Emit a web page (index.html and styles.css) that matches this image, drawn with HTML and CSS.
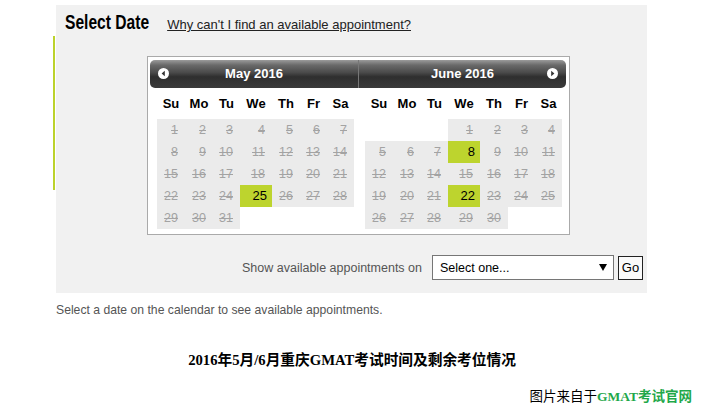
FILE: index.html
```html
<!DOCTYPE html>
<html>
<head>
<meta charset="utf-8">
<link rel="stylesheet" href="styles.css">
</head>
<body>
<div class="page">
  <div class="row">
    <div class="accent"></div>
    <div class="panel">
      <div class="heading">
        <h2 class="title">Select Date</h2>
        <a class="why" href="#">Why can't I find an available appointment?</a>
      </div>
      <div class="calendar">
        <div class="months">
          <div class="month">
            <div class="mhead mhead-first">
              <svg class="nav nav-prev" width="11" height="11" viewBox="0 0 11 11"><circle cx="5.5" cy="5.5" r="5.5" fill="#fff"/><path d="M6.8 2.8 L3.6 5.5 L6.8 8.2 Z" fill="#333"/></svg>
              <span>May 2016</span>
            </div>
            <div class="dnames"><span>Su</span><span>Mo</span><span>Tu</span><span>We</span><span>Th</span><span>Fr</span><span>Sa</span></div>
            <div class="days">
              <span class="d">1</span><span class="d">2</span><span class="d">3</span><span class="d">4</span><span class="d">5</span><span class="d">6</span><span class="d">7</span>
              <span class="d">8</span><span class="d">9</span><span class="d">10</span><span class="d">11</span><span class="d">12</span><span class="d">13</span><span class="d">14</span>
              <span class="d">15</span><span class="d">16</span><span class="d">17</span><span class="d">18</span><span class="d">19</span><span class="d">20</span><span class="d">21</span>
              <span class="d">22</span><span class="d">23</span><span class="d">24</span><span class="d on">25</span><span class="d">26</span><span class="d">27</span><span class="d">28</span>
              <span class="d">29</span><span class="d">30</span><span class="d">31</span><span class="e"></span><span class="e"></span><span class="e"></span><span class="e"></span>
            </div>
          </div>
          <div class="month">
            <div class="mhead mhead-last">
              <span>June 2016</span>
              <svg class="nav nav-next" width="11" height="11" viewBox="0 0 11 11"><circle cx="5.5" cy="5.5" r="5.5" fill="#fff"/><path d="M4.2 2.8 L7.4 5.5 L4.2 8.2 Z" fill="#333"/></svg>
            </div>
            <div class="dnames"><span>Su</span><span>Mo</span><span>Tu</span><span>We</span><span>Th</span><span>Fr</span><span>Sa</span></div>
            <div class="days">
              <span class="e"></span><span class="e"></span><span class="e"></span><span class="d">1</span><span class="d">2</span><span class="d">3</span><span class="d">4</span>
              <span class="d">5</span><span class="d">6</span><span class="d">7</span><span class="d on">8</span><span class="d">9</span><span class="d">10</span><span class="d">11</span>
              <span class="d">12</span><span class="d">13</span><span class="d">14</span><span class="d">15</span><span class="d">16</span><span class="d">17</span><span class="d">18</span>
              <span class="d">19</span><span class="d">20</span><span class="d">21</span><span class="d on">22</span><span class="d">23</span><span class="d">24</span><span class="d">25</span>
              <span class="d">26</span><span class="d">27</span><span class="d">28</span><span class="d">29</span><span class="d">30</span><span class="e"></span><span class="e"></span>
            </div>
          </div>
        </div>
      </div>
      <div class="controls">
        <span class="label">Show available appointments on</span>
        <div class="select">
          <span>Select one...</span>
          <svg width="8" height="7" viewBox="0 0 8 7"><path d="M0 0 L8 0 L4 7 Z" fill="#000"/></svg>
        </div>
        <button class="go" type="button">Go</button>
      </div>
    </div>
  </div>
  <p class="hint">Select a date on the calendar to see available appointments.</p>
  <h3 class="cn-title">2016年5月/6月重庆GMAT考试时间及剩余考位情况</h3>
  <p class="source">图片来自于<b>GMAT考试官网</b></p>
</div>
</body>
</html>
```

FILE: styles.css
```css
html, body {
  margin: 0;
  padding: 0;
  background: #fff;
}
body {
  font-family: "Liberation Sans", Arial, sans-serif;
  font-size: 13px;
  color: #000;
}
.page {
  padding-top: 5px;
}
.row {
  display: flex;
  margin-left: 53px;
}
.accent {
  width: 2px;
  height: 154px;
  margin-top: 31px;
  margin-right: 1px;
  background: #bcd22c;
}
.panel {
  width: 591px;
  height: 288px;
  box-sizing: border-box;
  background: #f1f1f1;
  padding: 5px 0 0 9px;
}
.heading {
  display: flex;
  align-items: baseline;
  height: 24px;
}
.title {
  margin: 0 -21px 0 0;
  font-family: "Liberation Sans", Arial, sans-serif;
  font-weight: bold;
  font-size: 19.5px;
  line-height: 25px;
  color: #000;
  transform: scaleX(0.8);
  transform-origin: left center;
}
.why {
  margin-left: 18px;
  font-size: 13px;
  color: #222;
  text-decoration: underline;
}
.calendar {
  margin: 22px 0 0 82px;
  width: 423px;
  height: 179px;
  box-sizing: border-box;
  border: 1px solid #aaa;
  background: #fff;
  padding: 3px 3px 5px 2px;
}
.months {
  display: flex;
}
.month {
  width: 208px;
}
.mhead {
  height: 28px;
  display: flex;
  align-items: center;
  justify-content: center;
  position: relative;
  background: linear-gradient(to bottom, #9b9b9b 0%, #6a6a6a 18%, #4a4a4a 45%, #2f2f2f 60%, #3a3a3a 100%);
  color: #fff;
  font-weight: bold;
  font-size: 13px;
  line-height: 26px;
}
.mhead-first {
  border-radius: 5px 0 0 5px;
}
.mhead-last {
  border-radius: 0 5px 5px 0;
  border-left: 1px solid #777;
  box-sizing: border-box;
}
.nav {
  position: absolute;
  top: 8px;
}
.nav-prev {
  left: 8px;
}
.nav-next {
  right: 8px;
}
.dnames,
.days {
  display: grid;
  grid-template-columns: 28px 28px 27px 32px 28px 27px 27px;
  padding-left: 7px;
}
.dnames {
  height: 31px;
  align-items: center;
  font-weight: bold;
  font-size: 13px;
  text-align: center;
}
.days {
  grid-auto-rows: 22px;
}
.d {
  background: #ebebeb;
  color: #a3a3a3;
  text-decoration: line-through;
  text-align: right;
  padding-right: 7px;
  line-height: 22px;
  font-size: 12.5px;
}
.d.on {
  background: #bdd42e;
  color: #000;
  text-decoration: none;
  padding-right: 5px;
  font-size: 13px;
}
.controls {
  display: flex;
  justify-content: flex-end;
  align-items: center;
  margin-top: 20px;
  padding-right: 4px;
}
.label {
  color: #555;
  font-size: 12.5px;
  margin-right: 10px;
}
.select {
  width: 182px;
  height: 25px;
  box-sizing: border-box;
  border: 1px solid #767676;
  background: #fff;
  display: flex;
  align-items: center;
  justify-content: space-between;
  padding: 0 6px 0 7px;
  font-size: 12.5px;
  color: #000;
  margin-right: 4px;
}
.go {
  width: 25px;
  height: 24px;
  box-sizing: border-box;
  border: 1px solid #222;
  background: #fafafa;
  padding: 0;
  font-family: "Liberation Sans", Arial, sans-serif;
  font-size: 13px;
  color: #000;
}
.hint {
  margin: 9px 0 0 56px;
  color: #555;
  font-size: 12.2px;
  line-height: 16px;
}
.cn-title {
  margin: 32px 0 0 0;
  text-align: center;
  font-family: "Liberation Serif", "Noto Sans CJK SC", serif;
  font-weight: bold;
  font-size: 14.7px;
  line-height: 20px;
}
.source {
  margin: 17px 12px 0 0;
  text-align: right;
  font-family: "Liberation Serif", "Noto Sans CJK SC", serif;
  font-size: 13.5px;
  line-height: 20px;
}
.source b {
  color: #1fa84a;
}
```
